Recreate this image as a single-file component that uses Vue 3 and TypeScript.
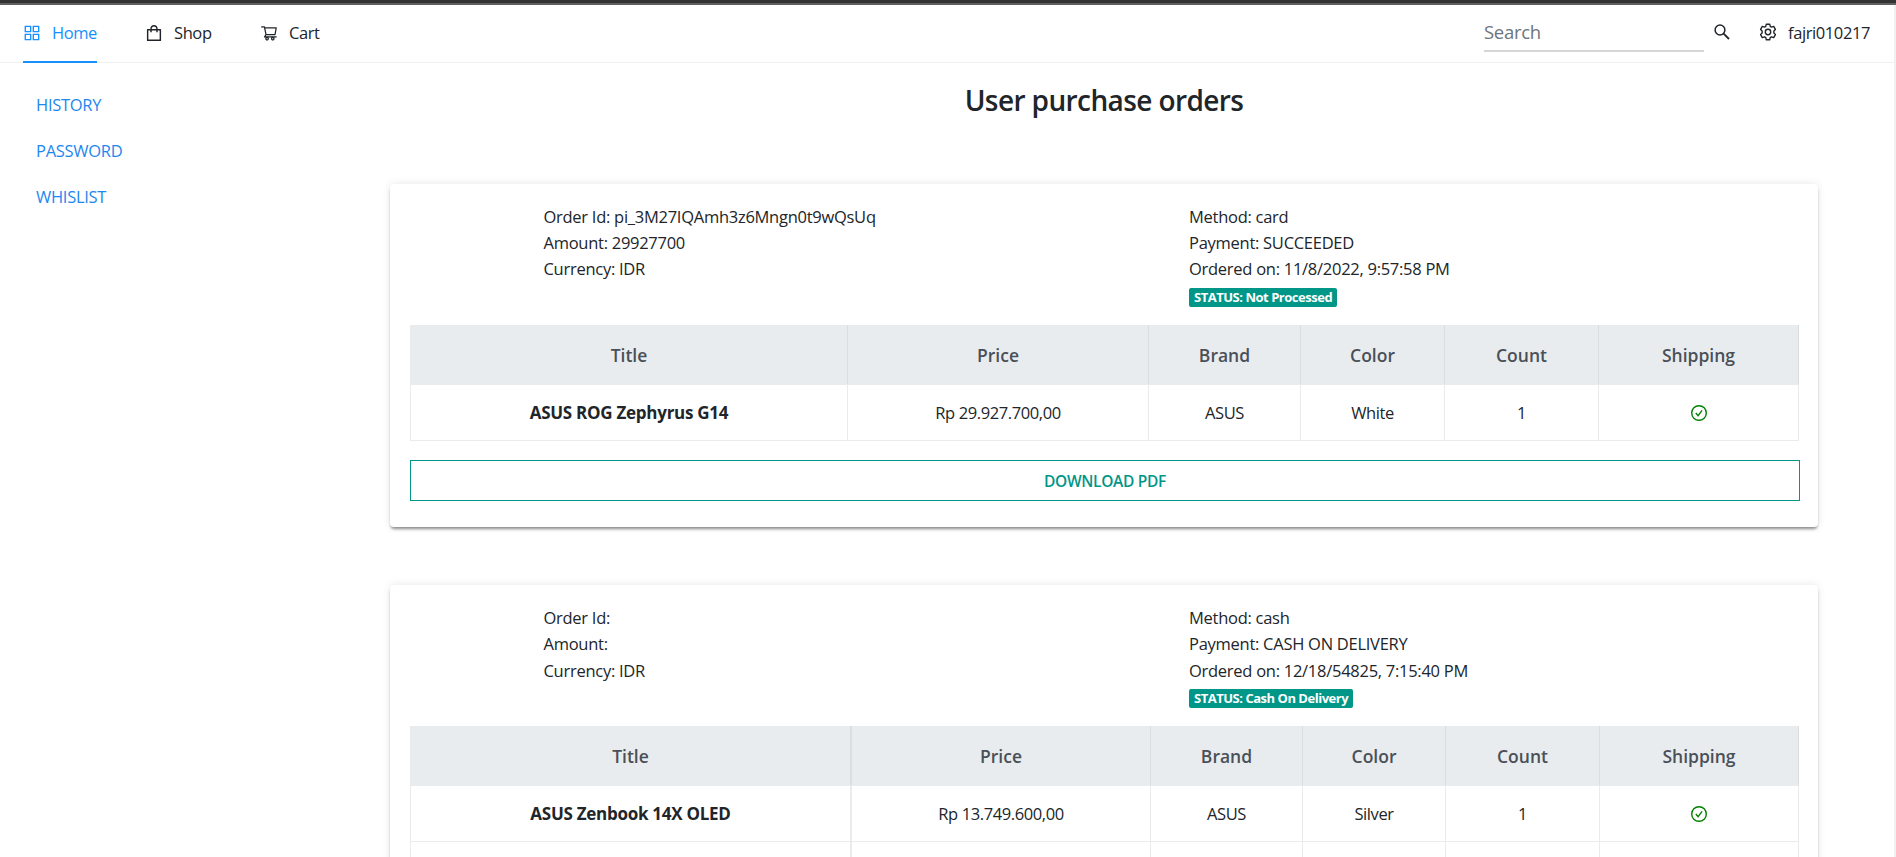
<script setup lang="ts">
interface Item {
  title: string
  price: string
  brand: string
  color: string
  count: number
}
interface Order {
  variant: string
  left: string[]
  right: string[]
  status: string
  items: Item[]
}

const headings = ['Title', 'Price', 'Brand', 'Color', 'Count', 'Shipping']
const links = ['History', 'Password', 'Whislist']

const orders: Order[] = [
  {
    variant: 'single',
    left: ['Order Id: pi_3M27IQAmh3z6Mngn0t9wQsUq', 'Amount: 29927700', 'Currency: IDR'],
    right: ['Method: card', 'Payment: SUCCEEDED', 'Ordered on: 11/8/2022, 9:57:58 PM'],
    status: 'STATUS: Not Processed',
    items: [{ title: 'ASUS ROG Zephyrus G14', price: 'Rp 29.927.700,00', brand: 'ASUS', color: 'White', count: 1 }],
  },
  {
    variant: 'multiple',
    left: ['Order Id:', 'Amount:', 'Currency: IDR'],
    right: ['Method: cash', 'Payment: CASH ON DELIVERY', 'Ordered on: 12/18/54825, 7:15:40 PM'],
    status: 'STATUS: Cash On Delivery',
    items: [{ title: 'ASUS Zenbook 14X OLED', price: 'Rp 13.749.600,00', brand: 'ASUS', color: 'Silver', count: 1 }],
  },
]
</script>

<template>
  <div class="page">
    <div class="window-edge"></div>
    <header class="nav">
      <a class="nav-item active">
        <svg viewBox="64 64 896 896" width="18" height="18" fill="currentColor">
          <path d="M464 144H160c-8.800 0-16 7.200-16 16v304c0 8.800 7.200 16 16 16h304c8.800 0 16-7.200 16-16V160c0-8.800-7.200-16-16-16zm-52 268H212V212h200v200zm452-268H560c-8.800 0-16 7.200-16 16v304c0 8.800 7.200 16 16 16h304c8.800 0 16-7.200 16-16V160c0-8.800-7.200-16-16-16zm-52 268H612V212h200v200zM464 544H160c-8.800 0-16 7.200-16 16v304c0 8.800 7.200 16 16 16h304c8.800 0 16-7.200 16-16V560c0-8.800-7.200-16-16-16zm-52 268H212V612h200v200zm452-268H560c-8.800 0-16 7.200-16 16v304c0 8.800 7.200 16 16 16h304c8.800 0 16-7.200 16-16V560c0-8.800-7.200-16-16-16zm-52 268H612V612h200v200z" />
        </svg>
        <span>Home</span>
      </a>
      <a class="nav-item shop">
        <svg viewBox="64 64 896 896" width="18" height="18" fill="currentColor">
          <path d="M832 312H696v-16c0-101.600-82.400-184-184-184s-184 82.400-184 184v16H192c-17.700 0-32 14.300-32 32v536c0 17.700 14.300 32 32 32h640c17.700 0 32-14.300 32-32V344c0-17.700-14.300-32-32-32zm-432-16c0-61.900 50.100-112 112-112s112 50.100 112 112v16H400v-16zm392 544H232V384h96v88c0 4.400 3.600 8 8 8h56c4.400 0 8-3.600 8-8v-88h224v88c0 4.400 3.600 8 8 8h56c4.400 0 8-3.600 8-8v-88h96v456z" />
        </svg>
        <span>Shop</span>
      </a>
      <a class="nav-item cart">
        <svg viewBox="0 0 1024 1024" width="18" height="18" fill="currentColor">
          <path d="M922.900 701.900H327.400l29.900-60.900 496.800-.9c16.800 0 31.200-12 34.200-28.600l68.800-385.100c1.800-10.100-.9-20.500-7.500-28.400a34.990 34.990 0 0 0-26.600-12.500l-632-2.100-5.400-25.400c-3.400-16.200-18-28-34.600-28H96.500a35.300 35.300 0 1 0 0 70.600h125.900L246 312.800l58.100 281.300-74.800 122.100a34.960 34.960 0 0 0-3 36.800c6 11.900 18.100 19.400 31.500 19.400h62.800a102.430 102.430 0 0 0-20.600 61.700c0 56.600 46 102.600 102.600 102.600s102.600-46 102.600-102.600c0-22.300-7.400-44-20.600-61.700h161.100a102.430 102.430 0 0 0-20.600 61.700c0 56.600 46 102.600 102.600 102.600s102.600-46 102.600-102.600c0-22.300-7.400-44-20.600-61.700H923c19.400 0 35.300-15.800 35.300-35.300a35.420 35.420 0 0 0-35.400-35.200zM305.700 253l575.800 1.900-56.400 315.800-452.300.8L305.700 253zm96.900 612.700c-17.400 0-31.600-14.200-31.600-31.600 0-17.400 14.200-31.600 31.600-31.600s31.600 14.200 31.600 31.600a31.600 31.600 0 0 1-31.600 31.600zm325.100 0c-17.400 0-31.600-14.200-31.600-31.600 0-17.400 14.200-31.600 31.600-31.600s31.600 14.200 31.600 31.600a31.600 31.600 0 0 1-31.600 31.600z" />
        </svg>
        <span>Cart</span>
      </a>
      <div class="search">Search</div>
      <svg class="search-icon" viewBox="0 0 16 16" width="16" height="16" fill="none" stroke="currentColor">
        <circle cx="6" cy="6" r="4.900" stroke-width="1.500" />
        <path d="M9.600 9.600L15 15" stroke-width="1.800" />
      </svg>
      <svg class="gear" viewBox="0 0 18 18" width="18" height="18" fill="none" stroke="currentColor" stroke-width="1.400">
        <path stroke-linejoin="round" d="M7.300 1.200h3.400l.5 2.100 1.300.8 2.200-.7 1.700 3-1.500 1.500v2.200l1.500 1.500-1.700 3-2.200-.7-1.300.8-.5 2.100H7.300l-.5-2.100-1.300-.8-2.200.7-1.700-3 1.500-1.500V7.900L1.600 6.400l1.700-3 2.200.7 1.300-.8z" />
        <circle cx="9" cy="9" r="2.700" />
      </svg>
      <span class="user">fajri010217</span>
    </header>

    <div class="body">
      <nav class="side">
        <a v-for="l in links" :key="l">{{ l }}</a>
      </nav>
      <main>
        <h1>User purchase orders</h1>
        <section v-for="o in orders" :key="o.variant" class="card" :class="o.variant">
          <div class="info">
            <div>
              <p v-for="t in o.left" :key="t">{{ t }}</p>
            </div>
            <div>
              <p v-for="t in o.right" :key="t">{{ t }}</p>
              <span class="badge">{{ o.status }}</span>
            </div>
          </div>
          <div class="table">
            <div class="row head">
              <div v-for="h in headings" :key="h">{{ h }}</div>
            </div>
            <div v-for="i in o.items" :key="i.title" class="row">
              <div><b>{{ i.title }}</b></div>
              <div>{{ i.price }}</div>
              <div>{{ i.brand }}</div>
              <div>{{ i.color }}</div>
              <div>{{ i.count }}</div>
              <div>
                <svg viewBox="0 0 18 18" width="18" height="18" fill="none" stroke="#008000">
                  <circle cx="9" cy="9" r="7.300" stroke-width="1.400" />
                  <path d="M5.800 9l2.300 2.700 4-5.300" stroke-width="1.400" />
                </svg>
              </div>
            </div>
            <div v-if="o.variant === 'multiple'" class="row">
              <div v-for="h in headings" :key="h"></div>
            </div>
          </div>
          <button v-if="o.variant === 'single'" class="pdf">Download PDF</button>
        </section>
      </main>
    </div>
    <div class="scroll-edge"></div>
  </div>
</template>

<style>
html,
body {
  overflow: hidden;
  background: #fff;
}
</style>

<style scoped>
* {
  box-sizing: border-box;
}
.page {
  position: relative;
  width: 1896px;
  height: 857px;
  overflow: hidden;
  font-family: 'Open Sans', 'Noto Sans', sans-serif;
  font-size: 16.5px;
  line-height: 26.25px;
  letter-spacing: -0.4px;
  color: #212529;
  background: #fff;
}
.window-edge {
  height: 5px;
  background: #333;
  border-bottom: 2px solid #5f5f5f;
}
.scroll-edge {
  position: absolute;
  top: 5px;
  right: 0;
  bottom: 0;
  width: 2px;
  background: #f1f1f1;
}
.nav {
  display: flex;
  height: 58px;
  padding-left: 23px;
  border-bottom: 1px solid #f0f0f0;
}
.nav-item {
  display: flex;
  gap: 11px;
  height: 58px;
  padding-top: 15px;
  border-bottom: 2px solid transparent;
}
.nav-item svg {
  margin-top: 4px;
}
.active {
  width: 74px;
  color: #1890ff;
  border-color: #1890ff;
}
.shop {
  margin-left: 48px;
  width: 68px;
}
.cart {
  margin-left: 47px;
}
.search {
  width: 220px;
  height: 47px;
  margin-left: auto;
  padding-top: 14px;
  border-bottom: 2px solid #d6d6d6;
  font-size: 18.5px;
  letter-spacing: -0.3px;
  color: #6c757d;
}
.search-icon {
  margin: 19px 29px 0 10px;
}
.gear {
  margin: 18px 11px 0 0;
}
.user {
  width: 108px;
  padding-top: 15px;
}
.body {
  display: flex;
}
.side {
  width: 390px;
  padding: 29px 36px;
  display: flex;
  flex-direction: column;
  gap: 19.75px;
  color: #1e87f0;
  letter-spacing: -0.28px;
  text-transform: uppercase;
}
main {
  width: 1428px;
}
h1 {
  margin: 0;
  padding-top: 20px;
  height: 121px;
  font-size: 28px;
  line-height: 34px;
  font-weight: 550;
  text-align: center;
  letter-spacing: -0.6px;
}
.card {
  height: 343px;
  margin-bottom: 58px;
  padding: 20px 19px 0 20px;
  border-radius: 4px;
  background: #fff;
  box-shadow: 0 0 8px rgba(0, 0, 0, 0.1), 0 3px 3px -1px rgba(0, 0, 0, 0.42);
}
.info {
  display: grid;
  grid-template-columns: 645.5px 1fr;
  height: 121px;
  padding-left: 133.5px;
  letter-spacing: -0.27px;
}
.info p {
  margin: 0;
}
.single .info p {
  line-height: 26px;
}
.badge {
  display: block;
  width: fit-content;
  height: 19px;
  margin-top: 5px;
  padding: 0 5px;
  border-radius: 2px;
  background: #009688;
  color: #fff;
  font-size: 13px;
  line-height: 19px;
  font-weight: 700;
  letter-spacing: -0.48px;
}
.single .badge {
  margin-top: 6px;
}
.table {
  width: 1389px;
  border-left: 1px solid #ebebeb;
}
.row {
  display: grid;
  grid-template-columns: 437px 301px 152px 144px 154px 200px;
  height: 56px;
  border-bottom: 1px solid #ebebeb;
}
.multiple .row {
  grid-template-columns: 441px 299px 152px 143px 154px 199px;
}
.row > div {
  display: flex;
  align-items: center;
  justify-content: center;
  padding-top: 1px;
  border-right: 1px solid #ebebeb;
}
.row b {
  font-size: 17px;
  letter-spacing: -0.27px;
}
.multiple .row > div:first-child {
  border-right-width: 2px;
}
.row.head {
  height: 60px;
  background: #e9ecef;
  color: #495057;
  font-size: 17.5px;
  font-weight: 600;
  letter-spacing: 0;
  border-color: #e9ecef;
}
.row.head > div {
  padding-top: 2px;
  border-color: #dbdee1;
}
.pdf {
  display: block;
  width: 1390px;
  height: 41px;
  margin-top: 19px;
  padding: 0;
  border: 1px solid #009688;
  background: #fff;
  color: #009688;
  font: 600 15.5px 'Open Sans', 'Noto Sans', sans-serif;
  letter-spacing: -0.3px;
  text-transform: uppercase;
}
</style>
